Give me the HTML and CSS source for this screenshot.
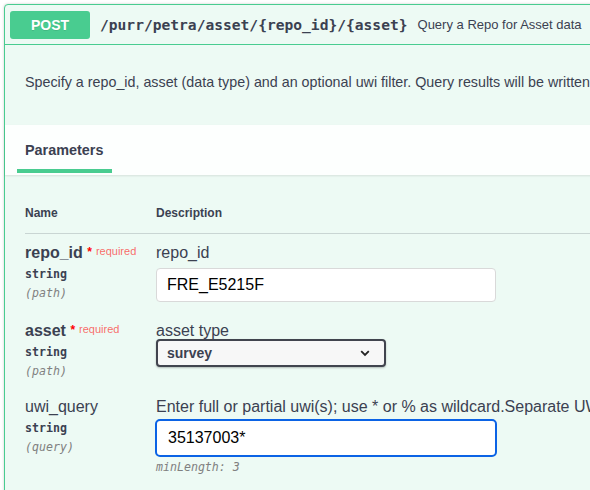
FILE: index.html
```html
<!DOCTYPE html>
<html>
<head>
<meta charset="utf-8">
<link rel="stylesheet" href="styles.css">
</head>
<body>
<div class="opblock">
  <div class="summary">
    <span class="method">POST</span>
    <span class="path">/purr/petra/asset/{repo_id}/{asset}</span>
    <span class="summary-desc">Query a Repo for Asset data</span>
  </div>
  <div class="description">
    <p>Specify a repo_id, asset (data type) and an optional uwi filter. Query results will be written to a file</p>
  </div>
  <div class="section-header">
    <div class="tab">Parameters</div>
  </div>
  <div class="params">
    <div class="row head">
      <div class="col-name">Name</div>
      <div class="col-desc">Description</div>
    </div>
    <div class="row">
      <div class="col-name">
        <div class="pname required">repo_id <span class="star">*</span><span class="req">required</span></div>
        <div class="ptype">string</div>
        <div class="pin">(path)</div>
      </div>
      <div class="col-desc">
        <div class="pdesc">repo_id</div>
        <div class="input">FRE_E5215F</div>
      </div>
    </div>
    <div class="row">
      <div class="col-name">
        <div class="pname required">asset <span class="star">*</span><span class="req">required</span></div>
        <div class="ptype">string</div>
        <div class="pin">(path)</div>
      </div>
      <div class="col-desc">
        <div class="pdesc tight">asset type</div>
        <div class="select"><span>survey</span>
          <svg class="chev" width="10" height="7" viewBox="0 0 10 7"><path d="M1.2 1.2 L5 5 L8.8 1.2" fill="none" stroke="#222" stroke-width="1.8"/></svg>
        </div>
      </div>
    </div>
    <div class="row">
      <div class="col-name">
        <div class="pname">uwi_query</div>
        <div class="ptype">string</div>
        <div class="pin">(query)</div>
      </div>
      <div class="col-desc">
        <div class="pdesc">Enter full or partial uwi(s); use * or % as wildcard.Separate UWIs with commas</div>
        <div class="input focus">35137003*</div>
        <div class="minlen">minLength: 3</div>
      </div>
    </div>
  </div>
</div>
</body>
</html>
```

FILE: styles.css
```css
html, body {
  margin: 0;
  padding: 0;
  background: #ffffff;
  overflow: hidden;
}
body {
  padding: 4px 0 0 4px;
  font-family: "Liberation Sans", Arial, sans-serif;
  color: #3b4151;
}
.opblock {
  width: 760px;
  height: 520px;
  border: 1px solid #49cc90;
  border-radius: 4px;
  background: #edfaf4;
  box-shadow: 0 0 3px rgba(0,0,0,.19);
}
.summary {
  display: flex;
  align-items: center;
  height: 39px;
  padding: 0 5px;
  border-bottom: 1px solid #49cc90;
  white-space: nowrap;
}
.method {
  width: 80px;
  height: 28px;
  line-height: 28px;
  text-align: center;
  background: #49cc90;
  color: #fff;
  border-radius: 3px;
  font-weight: bold;
  font-size: 14px;
  text-shadow: 0 1px 0 rgba(0,0,0,.1);
}
.path {
  margin-left: 10px;
  font-family: "DejaVu Sans Mono", monospace;
  font-weight: bold;
  font-size: 14.6px;
  color: #3b4151;
}
.summary-desc {
  margin-left: 10px;
  font-size: 13px;
  color: #3b4151;
}
.description {
  height: 80px;
  box-sizing: border-box;
  padding: 29px 20px 0;
  white-space: nowrap;
}
.description p {
  margin: 0;
  font-size: 14.3px;
  line-height: 17px;
}
.section-header {
  height: 50px;
  box-sizing: border-box;
  background: rgba(255,255,255,.85);
  box-shadow: 0 1px 2px rgba(0,0,0,.1);
  padding: 0 12px;
  display: flex;
  align-items: flex-end;
}
.tab {
  font-size: 14.4px;
  font-weight: bold;
  padding: 0 9px 0 8px;
  height: 41px;
  line-height: 37px;
  box-sizing: border-box;
  border-bottom: 4px solid #49cc90;
  margin-bottom: 2px;
}
.params {
  padding: 0 20px;
}
.row {
  display: flex;
  padding: 10px 0;
}
.row.head {
  padding: 31px 0 0;
  height: 59px;
  box-sizing: border-box;
  border-bottom: 1px solid rgba(59,65,81,.2);
  font-size: 12px;
  font-weight: bold;
  line-height: 14px;
}
.col-name {
  width: 131px;
  flex: none;
}
.col-desc {
  flex: 1;
  white-space: nowrap;
}
.pname {
  font-size: 16px;
  line-height: 18px;
  white-space: nowrap;
}
.pname.required {
  font-weight: bold;
}
.star {
  color: red;
  font-size: 12px;
  vertical-align: top;
  position: relative;
  top: -1px;
}
.req {
  color: rgba(255,0,0,.6);
  font-size: 11px;
  font-weight: normal;
  vertical-align: top;
  position: relative;
  top: -2px;
  margin-left: 4px;
}
.ptype {
  font-family: "DejaVu Sans Mono", monospace;
  font-weight: bold;
  font-size: 11.6px;
  line-height: 14px;
  padding-top: 5px;
}
.pin {
  font-family: "DejaVu Sans Mono", monospace;
  font-style: italic;
  font-size: 11.6px;
  line-height: 14px;
  color: gray;
  padding-top: 5px;
}
.pdesc {
  font-size: 16px;
  line-height: 18px;
}
.pdesc.tight {
  line-height: 17px;
}
.input {
  margin-top: 6px;
  width: 340px;
  height: 34px;
  box-sizing: border-box;
  border: 1px solid #d9d9d9;
  border-radius: 4px;
  background: #fff;
  padding: 0 10px;
  font-size: 16px;
  line-height: 32px;
  color: #000;
}
.input.focus {
  margin-top: 3px;
  margin-left: -1px;
  width: 342px;
  height: 38px;
  border: 2px solid #0b63e5;
  border-radius: 5px;
  line-height: 34px;
  padding-left: 11px;
}
.select {
  width: 230px;
  height: 28px;
  box-sizing: border-box;
  border: 2px solid #41444e;
  border-radius: 4px;
  background: #f7f7f7;
  box-shadow: 0 1px 2px 0 rgba(0,0,0,.25);
  display: flex;
  align-items: center;
  justify-content: space-between;
  padding: 0 14px 0 9px;
  font-size: 14px;
  font-weight: bold;
  color: #3b4151;
}
.chev {
  display: block;
}
.minlen {
  margin-top: 4px;
  font-family: "DejaVu Sans Mono", monospace;
  font-style: italic;
  font-size: 11.6px;
  line-height: 13px;
  color: gray;
}
```
